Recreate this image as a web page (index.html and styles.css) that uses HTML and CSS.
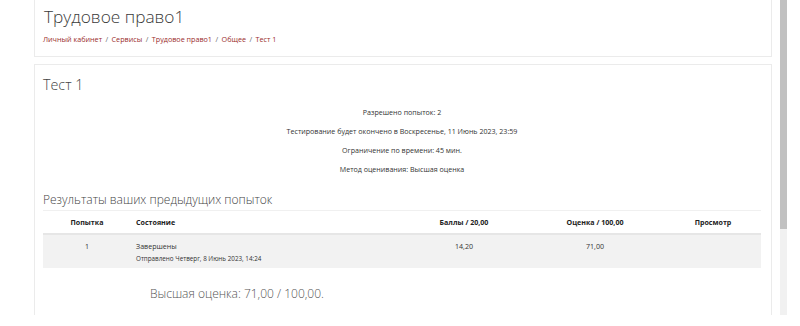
FILE: index.html
```html
<!DOCTYPE html>
<html lang="ru">
<head>
    <meta charset="UTF-8">
    <title>Трудовое право1: Тест 1</title>
    <link rel="stylesheet" href="styles.css">
</head>
<body>
    <div class="screen">
        <div class="page">
            <header class="card page-header">
                <h1 class="course-title">Трудовое право1</h1>
                <nav class="breadcrumb">
                    <a href="#">Личный кабинет</a> <span class="sep">/</span>
                    <a href="#">Сервисы</a> <span class="sep">/</span>
                    <a href="#">Трудовое право1</a> <span class="sep">/</span>
                    <a href="#">Общее</a> <span class="sep">/</span>
                    <a href="#">Тест 1</a>
                </nav>
            </header>

            <section class="card quiz">
                <h2 class="quiz-title">Тест 1</h2>
                <div class="quiz-info">
                    <p>Разрешено попыток: 2</p>
                    <p>Тестирование будет окончено в Воскресенье, 11 Июнь 2023, 23:59</p>
                    <p>Ограничение по времени: 45 мин.</p>
                    <p>Метод оценивания: Высшая оценка</p>
                </div>

                <h3 class="results-title">Результаты ваших предыдущих попыток</h3>
                <table class="attempts">
                    <thead>
                        <tr>
                            <th class="c-num">Попытка</th>
                            <th class="c-state">Состояние</th>
                            <th class="c-marks">Баллы / 20,00</th>
                            <th class="c-grade">Оценка / 100,00</th>
                            <th class="c-review">Просмотр</th>
                        </tr>
                    </thead>
                    <tbody>
                        <tr>
                            <td class="c-num">1</td>
                            <td class="c-state">Завершены<span class="submitted">Отправлено Четверг, 8 Июнь 2023, 14:24</span></td>
                            <td class="c-marks">14,20</td>
                            <td class="c-grade">71,00</td>
                            <td class="c-review"></td>
                        </tr>
                    </tbody>
                </table>

                <h3 class="best-grade">Высшая оценка: 71,00 / 100,00.</h3>
            </section>
        </div>
        <div class="scrollbar"><div class="thumb"></div></div>
    </div>
</body>
</html>
```

FILE: styles.css
```css
body {
    margin: 0;
    background: #fff;
    font-family: "Open Sans", sans-serif;
    color: #333;
}

.screen {
    display: flex;
    height: 315px;
    overflow: hidden;
}

.page {
    width: 780px;
    padding: 0 8px 0 34px;
    box-sizing: border-box;
}

.card {
    background: #fff;
    border: 1px solid #ebebeb;
}

.page-header {
    border-top: none;
    height: 57px;
    box-sizing: border-box;
    padding: 4px 0 0 9px;
}

.course-title {
    margin: 0;
    font-size: 17.3px;
    font-weight: 300;
    color: #3a3a3a;
    line-height: 26px;
}

.breadcrumb {
    margin-top: 3px;
    margin-left: -1px;
    font-size: 7.2px;
    line-height: 12px;
}

.breadcrumb a {
    color: #9b2d2d;
    text-decoration: none;
}

.breadcrumb .sep {
    color: #6a6a6a;
    margin: 0 1.6px;
}

.quiz {
    margin-top: 7px;
    height: 260px;
    padding: 10px 10px 0 8px;
    border-bottom: none;
}

.quiz-title {
    margin: 0;
    font-size: 14.3px;
    font-weight: 300;
    color: #444;
    line-height: 20px;
}

.quiz-info {
    text-align: center;
    font-size: 7.1px;
    color: #333;
    margin-top: 8px;
}

.quiz-info p {
    margin: 0;
    line-height: 19px;
}

.results-title {
    margin: 12px 0 0;
    font-size: 12px;
    font-weight: 300;
    color: #444;
    line-height: 17px;
}

.attempts {
    width: 100%;
    table-layout: fixed;
    border-collapse: collapse;
    margin-top: 2px;
    font-size: 7.1px;
    color: #333;
}

.attempts th {
    font-weight: 700;
    color: #222;
    height: 22px;
    border-top: 1px solid #f0f0f0;
    border-bottom: 2px solid #e6e6e6;
    padding: 0 5px;
}

.attempts td {
    background: #f2f2f2;
    height: 34px;
    vertical-align: top;
    padding: 6px 5px 0;
    box-sizing: border-box;
}

.c-num {
    width: 78px;
    text-align: center;
}

.c-state {
    text-align: left;
}

.c-marks {
    width: 112px;
    text-align: center;
}

.c-grade {
    width: 130px;
    text-align: center;
}

.c-review {
    width: 86px;
    text-align: center;
}

.submitted {
    display: block;
    font-size: 6.3px;
    margin-top: 3px;
}

.best-grade {
    margin: 17px 0 0 107px;
    font-size: 12px;
    font-weight: 300;
    color: #555;
}

.scrollbar {
    width: 7px;
    background: #f1f1f1;
}

.thumb {
    height: 229px;
    background: #c1c1c1;
}
```
